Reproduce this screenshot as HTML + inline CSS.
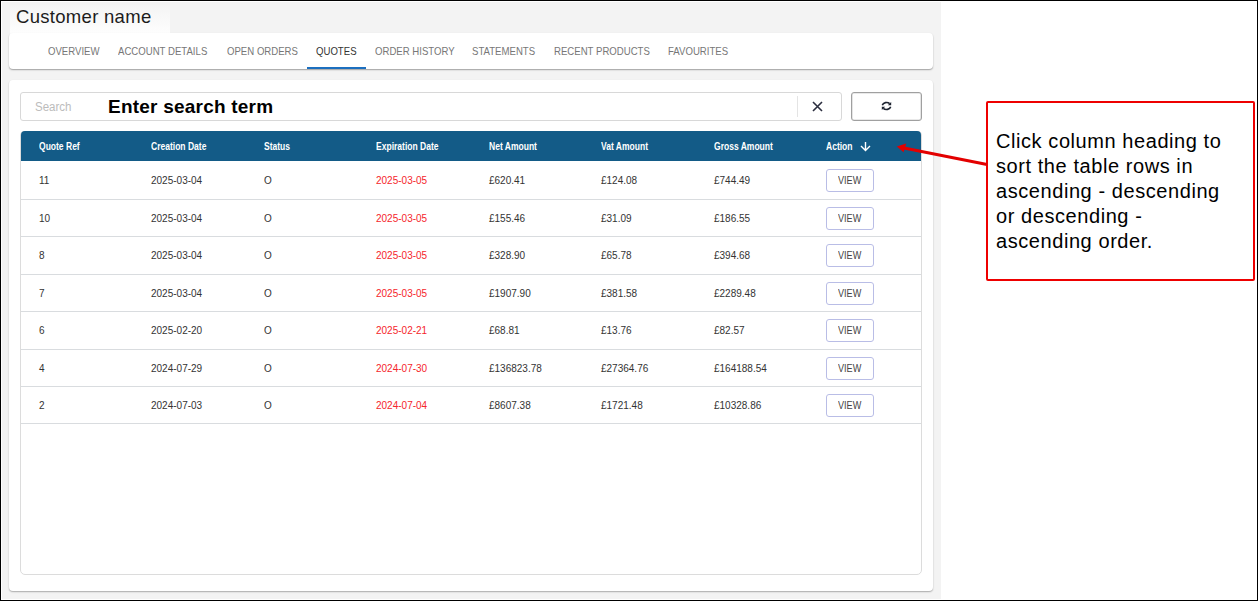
<!DOCTYPE html>
<html><head><meta charset="utf-8">
<style>
*{box-sizing:border-box;margin:0;padding:0}
html,body{width:1258px;height:601px;overflow:hidden;background:#fff;font-family:"Liberation Sans",sans-serif}
.abs{position:absolute}
#frame{position:absolute;left:0;top:0;width:1258px;height:601px;border-left:1px solid #000;border-top:1px solid #000;border-right:1px solid #000;border-bottom:1px solid #000}
#bg{left:2px;top:2px;width:939px;height:597px;background:#f3f3f3}
#cname{left:10px;top:5px;width:160px;height:29px;background:linear-gradient(#f4f4f4,#fefefe)}
#cname span{position:absolute;left:6px;top:1px;font-size:18.5px;letter-spacing:0.3px;color:#1c1c1c;white-space:nowrap}
#tabs{left:9px;top:33px;width:924px;height:36px;background:#fff;border-radius:4px;box-shadow:0 1px 1.5px rgba(0,0,0,.35)}
.tab{position:absolute;top:12px;font-size:11.3px;color:#777;white-space:nowrap;transform:scaleX(0.85);transform-origin:0 0}
.tab.act{color:#333}
#uline{left:307px;top:67px;width:59px;height:2px;background:#1c6fbf}
#card{left:9px;top:80px;width:924px;height:511px;background:#fff;border-radius:4px;box-shadow:0 1px 1.5px rgba(0,0,0,.3)}
#search{left:20px;top:92px;width:822px;height:29px;border:1px solid #d8d8d8;border-radius:3px;background:#fff}
#search .ph{position:absolute;left:14px;top:6.5px;font-size:12px;color:#bcbcbc;transform:scaleX(0.96);transform-origin:0 0}
#sdiv{left:797px;top:96px;width:1px;height:21px;background:#e4e4e4}
#refresh{left:851px;top:92px;width:71px;height:29px;border:1px solid #a0a0a0;box-shadow:inset 0 0 0 0.6px #d4d4d4;border-radius:3px;background:#fff}
#enter{left:108px;top:95.5px;font-size:19px;letter-spacing:0.22px;font-weight:bold;color:#000;white-space:nowrap}
#tbl{left:20px;top:131px;width:902px;height:444px;border:1px solid #dcdcdc;border-radius:4px 4px 5px 5px;background:#fff}
#thead{left:21px;top:131px;width:900px;height:30px;background:#135b87;border-radius:4px 4px 0 0}
.th{position:absolute;top:140.5px;font-size:10.4px;font-weight:bold;color:#fff;white-space:nowrap;transform:scaleX(0.82);transform-origin:0 0}
.rowline{position:absolute;left:21px;width:900px;height:1px;background:#d9dcdf}
.td{position:absolute;font-size:10px;color:#333;white-space:nowrap}
.td.red{color:#f5262b}
.btn{position:absolute;left:826px;width:48px;height:23px;border:1px solid #b9bde6;border-radius:3px;background:#fff}
.btn span{position:absolute;left:11px;top:5px;font-size:10px;color:#444;transform:scaleX(0.91);transform-origin:0 0}
#callout{left:986px;top:101px;width:269px;height:180px;border:2px solid #e00;border-radius:2px;background:#fff}
#callout div{position:absolute;left:8px;top:26px;font-size:20px;letter-spacing:0.57px;line-height:25px;color:#000;white-space:nowrap}
</style></head><body>
<div id="bg" class="abs"></div>
<div id="cname" class="abs"><span>Customer name</span></div>
<div id="tabs" class="abs">
<span class="tab" style="left:39px">OVERVIEW</span>
<span class="tab" style="left:109px">ACCOUNT DETAILS</span>
<span class="tab" style="left:218px">OPEN ORDERS</span>
<span class="tab act" style="left:307px">QUOTES</span>
<span class="tab" style="left:366px">ORDER HISTORY</span>
<span class="tab" style="left:463px">STATEMENTS</span>
<span class="tab" style="left:545px">RECENT PRODUCTS</span>
<span class="tab" style="left:659px">FAVOURITES</span>
</div>
<div id="uline" class="abs"></div>
<div id="card" class="abs"></div>
<div id="search" class="abs"><span class="ph">Search</span></div>
<div id="sdiv" class="abs"></div>
<svg class="abs" style="left:812px;top:101px" width="11" height="11" viewBox="0 0 11 11"><path d="M1 1L10 10M10 1L1 10" stroke="#2b2e3f" stroke-width="1.6"/></svg>
<div id="refresh" class="abs"></div>
<svg class="abs" style="left:881px;top:101px" width="11" height="10" viewBox="0 0 11 10"><path d="M1.3 4.3A4.4 3.7 0 0 1 8.7 2.6" fill="none" stroke="#1d2330" stroke-width="1.6"/><path d="M10.2 0.9V4.3H6.8Z" fill="#1d2330"/><path d="M9.7 5.7A4.4 3.7 0 0 1 2.3 7.4" fill="none" stroke="#1d2330" stroke-width="1.6"/><path d="M0.8 9.1V5.7H4.2Z" fill="#1d2330"/></svg>
<div id="enter" class="abs">Enter search term</div>
<div id="tbl" class="abs"></div>
<div id="thead" class="abs"></div>
<span class="th" style="left:39px">Quote Ref</span>
<span class="th" style="left:151px">Creation Date</span>
<span class="th" style="left:264px">Status</span>
<span class="th" style="left:376px">Expiration Date</span>
<span class="th" style="left:489px">Net Amount</span>
<span class="th" style="left:601px">Vat Amount</span>
<span class="th" style="left:714px">Gross Amount</span>
<span class="th" style="left:826px">Action</span>
<svg class="abs" style="left:860px;top:140px" width="11" height="12" viewBox="0 0 11 12"><path d="M5.5 2V10.5M1 6L5.5 10.5L10 6" fill="none" stroke="#fff" stroke-width="1.4"/></svg>
<div id="rows">
<span class="td" style="left:39px;top:175.0px">11</span>
<span class="td" style="left:151px;top:175.0px">2025-03-04</span>
<span class="td" style="left:264px;top:175.0px">O</span>
<span class="td red" style="left:376px;top:175.0px">2025-03-05</span>
<span class="td" style="left:489px;top:175.0px">£620.41</span>
<span class="td" style="left:601px;top:175.0px">£124.08</span>
<span class="td" style="left:714px;top:175.0px">£744.49</span>
<div class="btn" style="top:169.0px"><span>VIEW</span></div>
<div class="rowline" style="top:199px"></div>
<span class="td" style="left:39px;top:212.5px">10</span>
<span class="td" style="left:151px;top:212.5px">2025-03-04</span>
<span class="td" style="left:264px;top:212.5px">O</span>
<span class="td red" style="left:376px;top:212.5px">2025-03-05</span>
<span class="td" style="left:489px;top:212.5px">£155.46</span>
<span class="td" style="left:601px;top:212.5px">£31.09</span>
<span class="td" style="left:714px;top:212.5px">£186.55</span>
<div class="btn" style="top:206.5px"><span>VIEW</span></div>
<div class="rowline" style="top:236px"></div>
<span class="td" style="left:39px;top:250.0px">8</span>
<span class="td" style="left:151px;top:250.0px">2025-03-04</span>
<span class="td" style="left:264px;top:250.0px">O</span>
<span class="td red" style="left:376px;top:250.0px">2025-03-05</span>
<span class="td" style="left:489px;top:250.0px">£328.90</span>
<span class="td" style="left:601px;top:250.0px">£65.78</span>
<span class="td" style="left:714px;top:250.0px">£394.68</span>
<div class="btn" style="top:244.0px"><span>VIEW</span></div>
<div class="rowline" style="top:274px"></div>
<span class="td" style="left:39px;top:287.5px">7</span>
<span class="td" style="left:151px;top:287.5px">2025-03-04</span>
<span class="td" style="left:264px;top:287.5px">O</span>
<span class="td red" style="left:376px;top:287.5px">2025-03-05</span>
<span class="td" style="left:489px;top:287.5px">£1907.90</span>
<span class="td" style="left:601px;top:287.5px">£381.58</span>
<span class="td" style="left:714px;top:287.5px">£2289.48</span>
<div class="btn" style="top:281.5px"><span>VIEW</span></div>
<div class="rowline" style="top:311px"></div>
<span class="td" style="left:39px;top:325.0px">6</span>
<span class="td" style="left:151px;top:325.0px">2025-02-20</span>
<span class="td" style="left:264px;top:325.0px">O</span>
<span class="td red" style="left:376px;top:325.0px">2025-02-21</span>
<span class="td" style="left:489px;top:325.0px">£68.81</span>
<span class="td" style="left:601px;top:325.0px">£13.76</span>
<span class="td" style="left:714px;top:325.0px">£82.57</span>
<div class="btn" style="top:319.0px"><span>VIEW</span></div>
<div class="rowline" style="top:349px"></div>
<span class="td" style="left:39px;top:362.5px">4</span>
<span class="td" style="left:151px;top:362.5px">2024-07-29</span>
<span class="td" style="left:264px;top:362.5px">O</span>
<span class="td red" style="left:376px;top:362.5px">2024-07-30</span>
<span class="td" style="left:489px;top:362.5px">£136823.78</span>
<span class="td" style="left:601px;top:362.5px">£27364.76</span>
<span class="td" style="left:714px;top:362.5px">£164188.54</span>
<div class="btn" style="top:356.5px"><span>VIEW</span></div>
<div class="rowline" style="top:386px"></div>
<span class="td" style="left:39px;top:400.0px">2</span>
<span class="td" style="left:151px;top:400.0px">2024-07-03</span>
<span class="td" style="left:264px;top:400.0px">O</span>
<span class="td red" style="left:376px;top:400.0px">2024-07-04</span>
<span class="td" style="left:489px;top:400.0px">£8607.38</span>
<span class="td" style="left:601px;top:400.0px">£1721.48</span>
<span class="td" style="left:714px;top:400.0px">£10328.86</span>
<div class="btn" style="top:394.0px"><span>VIEW</span></div>
<div class="rowline" style="top:423px"></div>
</div>
<div id="callout" class="abs"><div>Click column heading to<br>sort the table rows in<br>ascending - descending<br>or descending -<br>ascending order.</div></div>
<svg class="abs" style="left:0;top:0" width="1258" height="601"><path d="M987 164.5L904 148" stroke="#e30000" stroke-width="3"/><path d="M896.8 146.5L906.2 143.6L903.6 152.2Z" fill="#e30000"/></svg>
<div id="frame"></div>
</body></html>
